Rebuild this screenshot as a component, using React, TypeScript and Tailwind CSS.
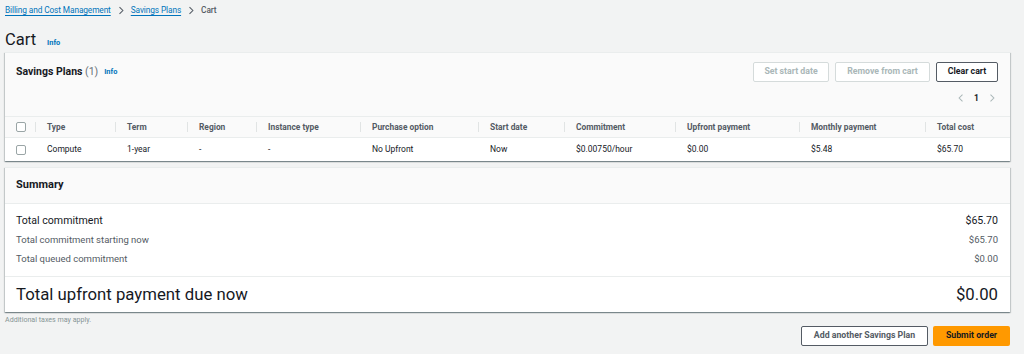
import React from "react";

const font = { fontFamily: "Roboto, 'Liberation Sans', sans-serif" };

function Chevron({ dir = "right", className = "" }: { dir?: "left" | "right"; className?: string }) {
  return (
    <svg viewBox="0 0 8 12" className={className} fill="none" stroke="currentColor" strokeWidth="1.4">
      {dir === "right" ? <path d="M2 1.5 L6.5 6 L2 10.5" /> : <path d="M6 1.5 L1.5 6 L6 10.5" />}
    </svg>
  );
}

function Box() {
  return <div className="w-[10px] h-[10px] rounded-[2px] border border-[#9aa5a6] bg-white" />;
}

const columns = [
  { label: "Type", value: "Compute" },
  { label: "Term", value: "1-year" },
  { label: "Region", value: "-" },
  { label: "Instance type", value: "-" },
  { label: "Purchase option", value: "No Upfront" },
  { label: "Start date", value: "Now" },
  { label: "Commitment", value: "$0.00750/hour" },
  { label: "Upfront payment", value: "$0.00" },
  { label: "Monthly payment", value: "$5.48" },
  { label: "Total cost", value: "$65.70" },
];

const grid = "grid grid-cols-[30px_80px_72px_69px_104px_118px_86px_111px_124px_126px_1fr]";

const panelShadow =
  "shadow-[0_1px_1px_0_rgba(0,28,36,0.3),1px_1px_1px_0_rgba(0,28,36,0.15),-1px_1px_1px_0_rgba(0,28,36,0.15)]";

export default function App() {
  return (
    <div className="min-h-[354px] bg-[#f2f3f3] text-[#16191f] pl-[5px] pr-[14px]" style={font}>
      {/* breadcrumb */}
      <nav className="h-[20px] flex items-center gap-[7px] text-[8.3px] tracking-[-0.1px]">
        <a className="text-[#0073bb] underline underline-offset-2">Billing and Cost Management</a>
        <Chevron className="w-[6px] h-[9px] text-[#545b64]" />
        <a className="text-[#0073bb] underline underline-offset-2">Savings Plans</a>
        <Chevron className="w-[6px] h-[9px] text-[#545b64]" />
        <span className="text-[#545b64] font-medium">Cart</span>
      </nav>

      {/* title */}
      <div className="mt-[10px] h-[20px] flex items-end gap-[11px]">
        <h1 className="text-[16.5px] leading-[20px]">Cart</h1>
        <span className="text-[7.4px] font-bold text-[#0073bb] leading-[14px]">Info</span>
      </div>

      {/* savings plans panel */}
      <section className={`mt-[2px] bg-white ${panelShadow}`}>
        <div className="bg-[#fafafa] pt-[9px] pb-[11px] pl-[11px] pr-[12px] border-t border-[#eaeded]">
          <div className="h-[20px] flex items-center justify-between">
            <div className="flex items-center gap-[6px]">
              <span className="text-[10.5px] font-bold">
                Savings Plans <span className="font-normal text-[#687078]">(1)</span>
              </span>
              <span className="text-[7.4px] font-bold text-[#0073bb]">Info</span>
            </div>
            <div className="flex items-center gap-[6px] text-[8.75px] font-bold">
              <button className="h-[20px] w-[76px] border border-[#d5dbdb] rounded-[2px] text-[#aab7b8] bg-white">
                Set start date
              </button>
              <button className="h-[20px] w-[95px] border border-[#d5dbdb] rounded-[2px] text-[#aab7b8] bg-white">
                Remove from cart
              </button>
              <button className="h-[20px] w-[62px] border border-[#545b64] rounded-[2px] text-[#16191f] bg-white">
                Clear cart
              </button>
            </div>
          </div>
          <div className="mt-[9px] h-[14px] flex items-center justify-end gap-[10px] pr-[3px]">
            <Chevron dir="left" className="w-[6px] h-[10px] text-[#aab7b8]" />
            <span className="text-[8.5px] font-bold">1</span>
            <Chevron className="w-[6px] h-[10px] text-[#aab7b8]" />
          </div>
        </div>

        {/* table header */}
        <div className={`${grid} h-[22px] bg-[#fafafa] border-t border-b border-[#eaeded] text-[8.4px] font-bold text-[#545b64]`}>
          <div className="flex items-center pl-[11px]">
            <Box />
          </div>
          {columns.map((c) => (
            <div key={c.label} className="relative flex items-center pl-[12px]">
              <span className="absolute left-0 top-[5px] bottom-[5px] w-px bg-[#e1e4e4]" />
              {c.label}
            </div>
          ))}
        </div>

        {/* table body */}
        <div className={`${grid} h-[23px] text-[8.5px] text-[#16191f]`}>
          <div className="flex items-center pl-[11px]">
            <Box />
          </div>
          {columns.map((c) => (
            <div key={c.label} className="flex items-center pl-[12px]">
              {c.value}
            </div>
          ))}
        </div>
      </section>

      {/* summary panel */}
      <section className={`mt-[6px] bg-white ${panelShadow}`}>
        <div className="h-[37px] bg-[#fafafa] border-t border-b border-[#eaeded] flex items-center pl-[11px]">
          <h2 className="text-[11px] font-bold">Summary</h2>
        </div>
        <div className="pt-[7px] pb-[8px] pl-[11px] pr-[12px] border-b border-[#eaeded]">
          <div className="h-[20px] flex items-center justify-between text-[10.6px]">
            <span>Total commitment</span>
            <span>$65.70</span>
          </div>
          <div className="h-[19px] flex items-center justify-between text-[9.5px] text-[#545b64]">
            <span>Total commitment starting now</span>
            <span>$65.70</span>
          </div>
          <div className="h-[18px] flex items-center justify-between text-[9.5px] text-[#545b64]">
            <span>Total queued commitment</span>
            <span>$0.00</span>
          </div>
        </div>
        <div className="h-[35px] flex items-center justify-between pl-[11px] pr-[12px] text-[16.75px]">
          <span>Total upfront payment due now</span>
          <span>$0.00</span>
        </div>
      </section>

      <p className="mt-[3px] h-[10px] leading-[10px] text-[7.1px] text-[#879596]">Additional taxes may apply.</p>

      <div className="mt-[1px] flex justify-end gap-[5px] text-[8.75px] font-bold">
        <button className="h-[20px] w-[127px] border border-[#545b64] rounded-[2px] bg-white text-[#545b64]">
          Add another Savings Plan
        </button>
        <button className="h-[20px] w-[77px] rounded-[2px] bg-[#ff9900] text-[#16191f]">Submit order</button>
      </div>
    </div>
  );
}
